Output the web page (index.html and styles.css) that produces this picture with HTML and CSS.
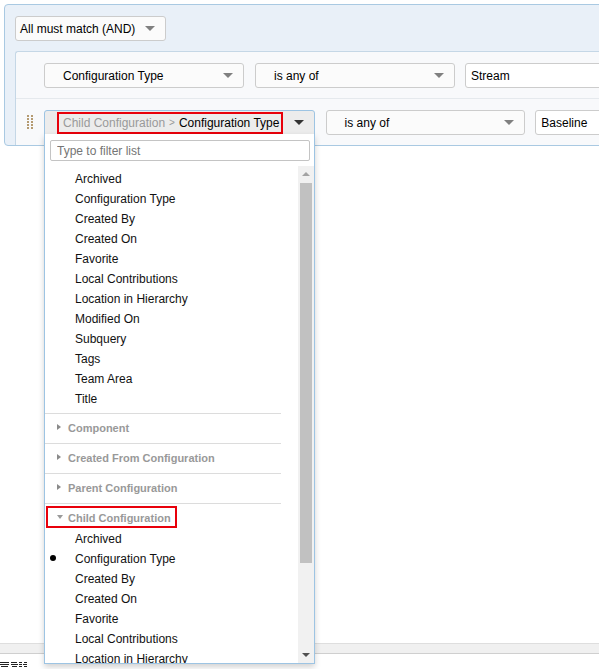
FILE: index.html
```html
<!DOCTYPE html>
<html lang="en">
<head>
    <meta charset="UTF-8">
    <title>Query Conditions</title>
    <link rel="stylesheet" href="styles.css">
</head>
<body>
    <div class="panel">
        <div class="select match">
            <span class="select-text">All must match (AND)</span>
            <span class="caret"></span>
        </div>

        <div class="rules">
            <div class="rule">
                <span class="handle blank"></span>
                <div class="select attr">
                    <span class="select-text">Configuration Type</span>
                    <span class="caret"></span>
                </div>
                <div class="select op">
                    <span class="select-text">is any of</span>
                    <span class="caret"></span>
                </div>
                <div class="value">Stream</div>
            </div>

            <div class="rule">
                <span class="handle">
                    <svg width="6" height="15" viewBox="0 0 6 15">
                        <rect x="0" y="0" width="2" height="2"/><rect x="4" y="0" width="2" height="2"/>
                        <rect x="0" y="3" width="2" height="2"/><rect x="4" y="3" width="2" height="2"/>
                        <rect x="0" y="6" width="2" height="2"/><rect x="4" y="6" width="2" height="2"/>
                        <rect x="0" y="9" width="2" height="2"/><rect x="4" y="9" width="2" height="2"/>
                        <rect x="0" y="12" width="2" height="2"/><rect x="4" y="12" width="2" height="2"/>
                    </svg>
                </span>
                <div class="select attr wide open">
                    <span class="crumb">
                        <span class="crumb-parent">Child Configuration</span>
                        <span class="crumb-sep">&gt;</span>
                        <span>Configuration Type</span>
                    </span>
                    <span class="caret dark"></span>

                    <div class="dropdown">
                        <div class="filter">
                            <input type="text" placeholder="Type to filter list">
                        </div>
                        <div class="list">
                            <div class="list-body">
                                <div class="items top-items">
                                    <div class="item">Archived</div>
                                    <div class="item">Configuration Type</div>
                                    <div class="item">Created By</div>
                                    <div class="item">Created On</div>
                                    <div class="item">Favorite</div>
                                    <div class="item">Local Contributions</div>
                                    <div class="item">Location in Hierarchy</div>
                                    <div class="item">Modified On</div>
                                    <div class="item">Subquery</div>
                                    <div class="item">Tags</div>
                                    <div class="item">Team Area</div>
                                    <div class="item">Title</div>
                                </div>
                                <div class="group collapsed">
                                    <div class="group-head"><span class="group-label"><span class="tri"><span class="tri-right"></span></span>Component</span></div>
                                </div>
                                <div class="group collapsed">
                                    <div class="group-head"><span class="group-label"><span class="tri"><span class="tri-right"></span></span>Created From Configuration</span></div>
                                </div>
                                <div class="group collapsed">
                                    <div class="group-head"><span class="group-label"><span class="tri"><span class="tri-right"></span></span>Parent Configuration</span></div>
                                </div>
                                <div class="group">
                                    <div class="group-head"><span class="group-label marked"><span class="tri"><span class="tri-down"></span></span>Child Configuration</span></div>
                                    <div class="items">
                                        <div class="item">Archived</div>
                                        <div class="item current">Configuration Type</div>
                                        <div class="item">Created By</div>
                                        <div class="item">Created On</div>
                                        <div class="item">Favorite</div>
                                        <div class="item">Local Contributions</div>
                                        <div class="item">Location in Hierarchy</div>
                                        <div class="item">Modified On</div>
                                    </div>
                                </div>
                            </div>
                            <div class="scroll">
                                <span class="scroll-up"></span>
                                <span class="scroll-thumb"></span>
                                <span class="scroll-down"></span>
                            </div>
                        </div>
                    </div>
                </div>
                <div class="select op">
                    <span class="select-text">is any of</span>
                    <span class="caret"></span>
                </div>
                <div class="value">Baseline</div>
            </div>
        </div>
    </div>

    <div class="footer">
        <div class="footer-bar"></div>
        <div class="footer-logo">
            <svg width="28" height="5" viewBox="0 0 28 5">
                <rect x="0" y="0" width="9" height="1"/><rect x="11" y="0" width="6" height="1"/><rect x="19" y="0" width="3" height="1"/><rect x="24" y="0" width="3" height="1"/>
                <rect x="0" y="2" width="9" height="1"/><rect x="11" y="2" width="7" height="1"/><rect x="19" y="2" width="3" height="1"/><rect x="23" y="2" width="4" height="1"/>
                <rect x="1" y="4" width="7" height="1"/><rect x="12" y="4" width="5" height="1"/><rect x="19" y="4" width="3" height="1"/><rect x="24" y="4" width="3" height="1"/>
            </svg>
        </div>
    </div>
</body>
</html>
```

FILE: styles.css
```css
:root {
    --panel-bg: #e9f0f8;
    --panel-border: #a9c9e2;
    --rules-bg: #f8f9fb;
    --field-border: #cccccc;
    --open-border: #9dc4e3;
    --marker-red: #e8000b;
    --group-text: #999999;
    --divider: #dcdcdc;
}

body {
    margin: 0;
    height: 100vh;
    display: flex;
    flex-direction: column;
    overflow: hidden;
    background: #ffffff;
    color: #000000;
    font-family: "Liberation Sans", Arial, sans-serif;
    font-size: 12px;
}

.panel {
    flex: none;
    align-self: flex-start;
    width: 720px;
    margin: 4px 0 0 4px;
    padding: 11px 0 0 10px;
    background: var(--panel-bg);
    border: 1px solid var(--panel-border);
    border-radius: 4px;
}

/* selects */
.select {
    position: relative;
    box-sizing: border-box;
    height: 25px;
    display: flex;
    align-items: center;
    padding: 0 10px 0 18px;
    background: #fbfbfb;
    border: 1px solid var(--field-border);
    border-radius: 3px;
    white-space: nowrap;
}

.select-text {
    flex: 1;
}

.match {
    width: 151px;
    padding-left: 4px;
}

.attr,
.op {
    width: 200px;
}

.attr.wide {
    width: 271px;
}

.caret {
    flex: none;
    width: 0;
    height: 0;
    border-left: 5px solid transparent;
    border-right: 5px solid transparent;
    border-top: 5px solid #808080;
}

.caret.dark {
    border-top-color: #333333;
    margin-left: auto;
}

.value {
    box-sizing: border-box;
    width: 200px;
    height: 25px;
    display: flex;
    align-items: center;
    padding-left: 5px;
    margin-left: -1px;
    background: #ffffff;
    border: 1px solid var(--field-border);
    border-radius: 3px;
}

/* rule rows */
.rules {
    margin-top: 10px;
    background: var(--rules-bg);
    border-top: 1px solid #c5d7e6;
    border-left: 1px solid #c5d7e6;
    border-top-left-radius: 3px;
}

.rule {
    display: flex;
    align-items: center;
    gap: 11px;
    padding: 11px 0 10px 11px;
}

.rule + .rule {
    border-top: 1px solid #e5e9ed;
}

.handle {
    flex: none;
    width: 6px;
    height: 15px;
    fill: #b59b72;
}

.handle.blank {
    visibility: hidden;
}

.handle svg {
    display: block;
}

/* open select */
.select.open {
    padding-left: 12px;
    background: #ececec;
    border-color: var(--open-border);
    border-radius: 3px 3px 0 0;
}

.crumb {
    display: flex;
    align-items: center;
    gap: 4px;
    box-sizing: border-box;
    height: 22px;
    padding: 0 2px 0 4px;
    border: 2px solid var(--marker-red);
}

.crumb-parent,
.crumb-sep {
    color: #9a9a9a;
}

.crumb-sep {
    font-size: 10px;
}

.dropdown {
    position: absolute;
    top: 100%;
    left: -1px;
    z-index: 10;
    box-sizing: border-box;
    width: 271px;
    height: 530px;
    display: flex;
    flex-direction: column;
    background: #ffffff;
    border: 1px solid var(--open-border);
    border-top: none;
    box-shadow: 0 3px 6px rgba(0, 0, 0, 0.18);
}

.filter {
    flex: none;
    padding: 6px 4px 0 5px;
}

.filter input {
    display: block;
    box-sizing: border-box;
    width: 100%;
    height: 21px;
    margin: 0;
    padding: 0 6px;
    border: 1px solid #c4c4c4;
    border-radius: 2px;
    font-family: inherit;
    font-size: 12px;
    outline: none;
}

.filter input::placeholder {
    color: #757575;
}

.list {
    flex: 1;
    min-height: 0;
    display: flex;
    margin-top: 5px;
    overflow: hidden;
}

.list-body {
    flex: 1;
    overflow: hidden;
    padding-top: 2px;
}

.items.top-items {
    padding-bottom: 5px;
}

.item {
    position: relative;
    box-sizing: border-box;
    height: 20px;
    line-height: 20px;
    padding: 1px 0 0 30px;
    color: #111111;
    white-space: nowrap;
}

.item.current::before {
    content: "";
    position: absolute;
    left: 5px;
    top: 7px;
    width: 6px;
    height: 6px;
    border-radius: 50%;
    background: #000000;
}

.group {
    margin-right: 17px;
    border-top: 1px solid var(--divider);
}

.group.collapsed {
    padding-bottom: 5px;
}

.group-head {
    padding: 2px 0 0 1px;
}

.group-label {
    display: inline-flex;
    align-items: center;
    box-sizing: border-box;
    height: 22px;
    padding: 2px 4px 0 9px;
    border: 2px solid transparent;
    color: var(--group-text);
    font-size: 11px;
    font-weight: bold;
    white-space: nowrap;
}

.group-label.marked {
    border-color: var(--marker-red);
}

.tri {
    flex: none;
    width: 11px;
    display: flex;
    align-items: center;
    margin-top: -2px;
}

.tri-right {
    width: 0;
    height: 0;
    border-left: 4px solid #8a8a8a;
    border-top: 3.5px solid transparent;
    border-bottom: 3.5px solid transparent;
}

.tri-down {
    width: 0;
    height: 0;
    border-top: 4px solid #9a9a9a;
    border-left: 3.5px solid transparent;
    border-right: 3.5px solid transparent;
}

/* fake scrollbar */
.scroll {
    flex: none;
    width: 16px;
    display: flex;
    flex-direction: column;
    align-items: center;
    background: #f1f1f1;
}

.scroll-up {
    margin-top: 6px;
    width: 0;
    height: 0;
    border-bottom: 4px solid #a3a3a3;
    border-left: 4px solid transparent;
    border-right: 4px solid transparent;
}

.scroll-thumb {
    width: 12px;
    height: 380px;
    margin-top: 7px;
    background: #c1c1c1;
}

.scroll-down {
    margin-top: auto;
    margin-bottom: 6px;
    width: 0;
    height: 0;
    border-top: 4px solid #505050;
    border-left: 4px solid transparent;
    border-right: 4px solid transparent;
}

/* footer */
.footer {
    flex: none;
    margin-top: auto;
}

.footer-bar {
    height: 9px;
    background: #f0f0f0;
    border-top: 1px solid #dedede;
    border-bottom: 1px solid #cfcfcf;
}

.footer-logo {
    height: 15px;
    padding-top: 8px;
    box-sizing: border-box;
    fill: #222222;
}

.footer-logo svg {
    display: block;
}
```
